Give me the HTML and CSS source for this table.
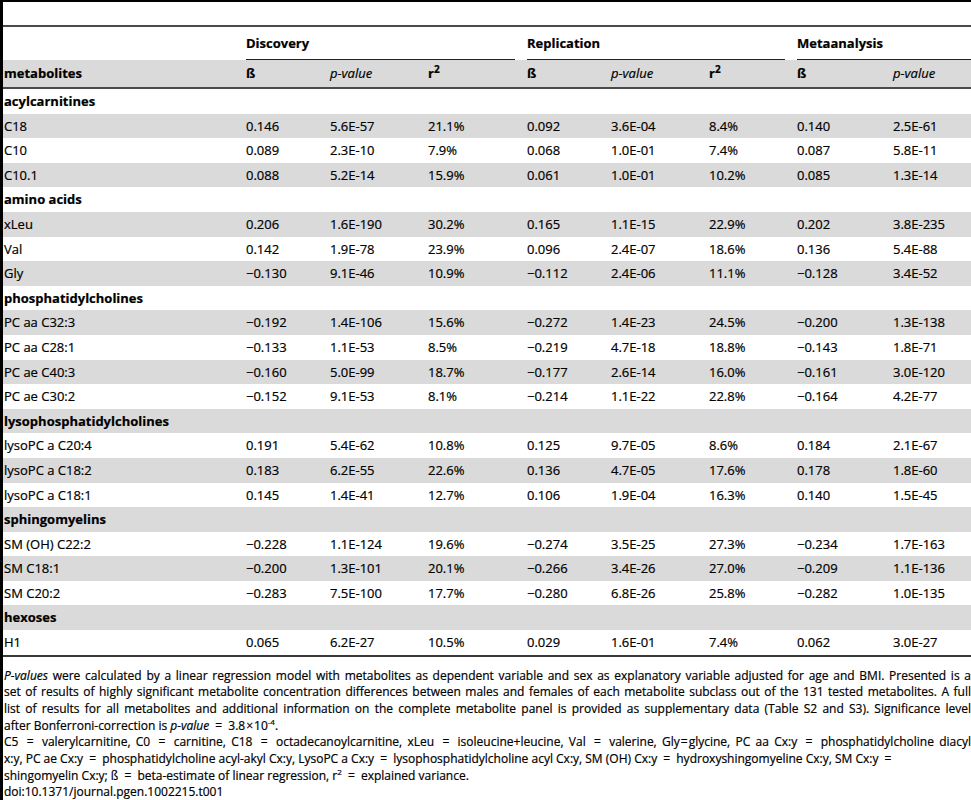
FILE: index.html
```html
<!DOCTYPE html>
<html>
<head>
<meta charset="utf-8">
<link rel="stylesheet" href="styles.css">
</head>
<body>
<div class="page">
<table class="tbl">
<colgroup>
<col class="c-name"><col class="c-b"><col class="c-p"><col class="c-r1">
<col class="c-b"><col class="c-p"><col class="c-r2"><col class="c-mb"><col class="c-mp">
</colgroup>
<thead>
<tr class="blank"><td colspan="9"><div class="blank-in"></div></td></tr>
<tr class="groups">
<td class="gname">&nbsp;</td>
<td colspan="3" class="gcell"><div class="glabel">Discovery</div></td>
<td colspan="3" class="gcell"><div class="glabel">Replication</div></td>
<td colspan="2" class="gcell"><div class="glabel">Metaanalysis</div></td>
</tr>
<tr class="heads">
<th class="name">metabolites</th>
<th>ß</th><th><i>p-value</i></th><th>r<sup>2</sup></th>
<th>ß</th><th><i>p-value</i></th><th>r<sup>2</sup></th>
<th>ß</th><th><i>p-value</i></th>
</tr>
</thead>
<tbody>
<tr class="cat"><td colspan="9">acylcarnitines</td></tr>
<tr><td class="name">C18</td><td>0.146</td><td>5.6E-57</td><td>21.1%</td><td>0.092</td><td>3.6E-04</td><td>8.4%</td><td>0.140</td><td>2.5E-61</td></tr>
<tr><td class="name">C10</td><td>0.089</td><td>2.3E-10</td><td>7.9%</td><td>0.068</td><td>1.0E-01</td><td>7.4%</td><td>0.087</td><td>5.8E-11</td></tr>
<tr><td class="name">C10.1</td><td>0.088</td><td>5.2E-14</td><td>15.9%</td><td>0.061</td><td>1.0E-01</td><td>10.2%</td><td>0.085</td><td>1.3E-14</td></tr>
<tr class="cat"><td colspan="9">amino acids</td></tr>
<tr><td class="name">xLeu</td><td>0.206</td><td>1.6E-190</td><td>30.2%</td><td>0.165</td><td>1.1E-15</td><td>22.9%</td><td>0.202</td><td>3.8E-235</td></tr>
<tr><td class="name">Val</td><td>0.142</td><td>1.9E-78</td><td>23.9%</td><td>0.096</td><td>2.4E-07</td><td>18.6%</td><td>0.136</td><td>5.4E-88</td></tr>
<tr><td class="name">Gly</td><td>−0.130</td><td>9.1E-46</td><td>10.9%</td><td>−0.112</td><td>2.4E-06</td><td>11.1%</td><td>−0.128</td><td>3.4E-52</td></tr>
<tr class="cat"><td colspan="9">phosphatidylcholines</td></tr>
<tr><td class="name">PC aa C32:3</td><td>−0.192</td><td>1.4E-106</td><td>15.6%</td><td>−0.272</td><td>1.4E-23</td><td>24.5%</td><td>−0.200</td><td>1.3E-138</td></tr>
<tr><td class="name">PC aa C28:1</td><td>−0.133</td><td>1.1E-53</td><td>8.5%</td><td>−0.219</td><td>4.7E-18</td><td>18.8%</td><td>−0.143</td><td>1.8E-71</td></tr>
<tr><td class="name">PC ae C40:3</td><td>−0.160</td><td>5.0E-99</td><td>18.7%</td><td>−0.177</td><td>2.6E-14</td><td>16.0%</td><td>−0.161</td><td>3.0E-120</td></tr>
<tr><td class="name">PC ae C30:2</td><td>−0.152</td><td>9.1E-53</td><td>8.1%</td><td>−0.214</td><td>1.1E-22</td><td>22.8%</td><td>−0.164</td><td>4.2E-77</td></tr>
<tr class="cat"><td colspan="9">lysophosphatidylcholines</td></tr>
<tr><td class="name">lysoPC a C20:4</td><td>0.191</td><td>5.4E-62</td><td>10.8%</td><td>0.125</td><td>9.7E-05</td><td>8.6%</td><td>0.184</td><td>2.1E-67</td></tr>
<tr><td class="name">lysoPC a C18:2</td><td>0.183</td><td>6.2E-55</td><td>22.6%</td><td>0.136</td><td>4.7E-05</td><td>17.6%</td><td>0.178</td><td>1.8E-60</td></tr>
<tr><td class="name">lysoPC a C18:1</td><td>0.145</td><td>1.4E-41</td><td>12.7%</td><td>0.106</td><td>1.9E-04</td><td>16.3%</td><td>0.140</td><td>1.5E-45</td></tr>
<tr class="cat"><td colspan="9">sphingomyelins</td></tr>
<tr><td class="name">SM (OH) C22:2</td><td>−0.228</td><td>1.1E-124</td><td>19.6%</td><td>−0.274</td><td>3.5E-25</td><td>27.3%</td><td>−0.234</td><td>1.7E-163</td></tr>
<tr><td class="name">SM C18:1</td><td>−0.200</td><td>1.3E-101</td><td>20.1%</td><td>−0.266</td><td>3.4E-26</td><td>27.0%</td><td>−0.209</td><td>1.1E-136</td></tr>
<tr><td class="name">SM C20:2</td><td>−0.283</td><td>7.5E-100</td><td>17.7%</td><td>−0.280</td><td>6.8E-26</td><td>25.8%</td><td>−0.282</td><td>1.0E-135</td></tr>
<tr class="cat"><td colspan="9">hexoses</td></tr>
<tr class="last"><td class="name">H1</td><td>0.065</td><td>6.2E-27</td><td>10.5%</td><td>0.029</td><td>1.6E-01</td><td>7.4%</td><td>0.062</td><td>3.0E-27</td></tr>
</tbody>
</table>
<div class="caption">
<div class="ln j"><i>P-values</i> were calculated by a linear regression model with metabolites as dependent variable and sex as explanatory variable adjusted for age and BMI. Presented is a</div>
<div class="ln j">set of results of highly significant metabolite concentration differences between males and females of each metabolite subclass out of the 131 tested metabolites. A full</div>
<div class="ln j">list of results for all metabolites and additional information on the complete metabolite panel is provided as supplementary data (Table S2 and S3). Significance level</div>
<div class="ln">after Bonferroni-correction is <i>p-value</i> <span class="eq">=</span> 3.8<span class="times">×</span>10<sup>-4</sup>.</div>
<div class="ln j">C5 <span class="eq">=</span> valerylcarnitine, C0 <span class="eq">=</span> carnitine, C18 <span class="eq">=</span> octadecanoylcarnitine, xLeu <span class="eq">=</span> isoleucine+leucine, Val <span class="eq">=</span> valerine, Gly<span class="eqt">=</span>glycine, PC aa Cx:y <span class="eq">=</span> phosphatidylcholine diacyl</div>
<div class="ln">x:y, PC ae Cx:y <span class="eq">=</span> phosphatidylcholine acyl-akyl Cx:y, LysoPC a Cx:y <span class="eq">=</span> lysophosphatidylcholine acyl Cx:y, SM (OH) Cx:y <span class="eq">=</span> hydroxyshingomyeline Cx:y, SM Cx:y <span class="eq">=</span></div>
<div class="ln">shingomyelin Cx:y; ß <span class="eq">=</span> beta-estimate of linear regression, r<sup>2</sup> <span class="eq">=</span> explained variance.</div>
<div class="ln">doi:10.1371/journal.pgen.1002215.t001</div>
</div>
</div>
</body>
</html>
```
FILE: styles.css
```css
html, body {
  margin: 0;
  padding: 0;
  background: #fff;
}
body {
  font-family: "Open Sans", "Noto Sans", sans-serif;
  color: #000;
  -webkit-text-stroke: 0.2px #000;
}
.page {
  box-sizing: border-box;
  width: 971px;
  min-height: 800px;
  border-style: solid;
  border-color: #000;
  border-width: 2px 0 0 3px;
}
.tbl {
  width: 968px;
  table-layout: fixed;
  border-collapse: separate;
  border-spacing: 0;
  font-size: 13px;
}
.c-name { width: 231px; }
.c-b { width: 84px; }
.c-p { width: 98px; }
.c-r1 { width: 99px; }
.c-r2 { width: 88px; }
.c-mb { width: 96px; }
.c-mp { width: 90px; }
.tbl td, .tbl th {
  padding: 0 0 0 12px;
  text-align: left;
  white-space: nowrap;
  overflow: hidden;
}
.tbl .name, .tbl .cat td, .tbl .gname {
  padding-left: 1px;
}
.blank td {
  padding: 0;
  border-bottom: 2px solid #4a4a4a;
}
.blank-in {
  height: 23px;
}
.groups td {
  line-height: 33px;
}
.groups .gcell {
  padding-left: 12px;
  vertical-align: bottom;
}
.glabel {
  font-weight: 700;
  line-height: 32px;
  border-bottom: 1px solid #222;
}
.heads {
  background: #dadada;
}
.heads th {
  font-weight: 700;
  line-height: 27px;
  border-bottom: 2px solid #4a4a4a;
}
.heads th i {
  font-weight: 400;
}
sup {
  font-size: 9px;
  line-height: 0;
  vertical-align: 5px;
}
.heads sup {
  font-weight: 700;
  font-size: 10px;
}
tbody td {
  line-height: 24.6px;
}
tbody tr:nth-child(even) {
  background: #dadada;
}
.cat td {
  font-weight: 700;
}
.last td {
  border-bottom: 2px solid #3a3a3a;
}
.caption {
  font-size: 12px;
  line-height: 16.67px;
  padding-top: 11px;
  padding-left: 1px;
}
.ln {
  white-space: nowrap;
}
.ln.j {
  text-align: justify;
  text-align-last: justify;
}
.eq {
  margin: 0 3px;
}
.eqt {
  margin: 0 1px;
}
.times {
  margin: 0 1px;
}
.caption sup {
  font-size: 8px;
  vertical-align: 5px;
}
```
